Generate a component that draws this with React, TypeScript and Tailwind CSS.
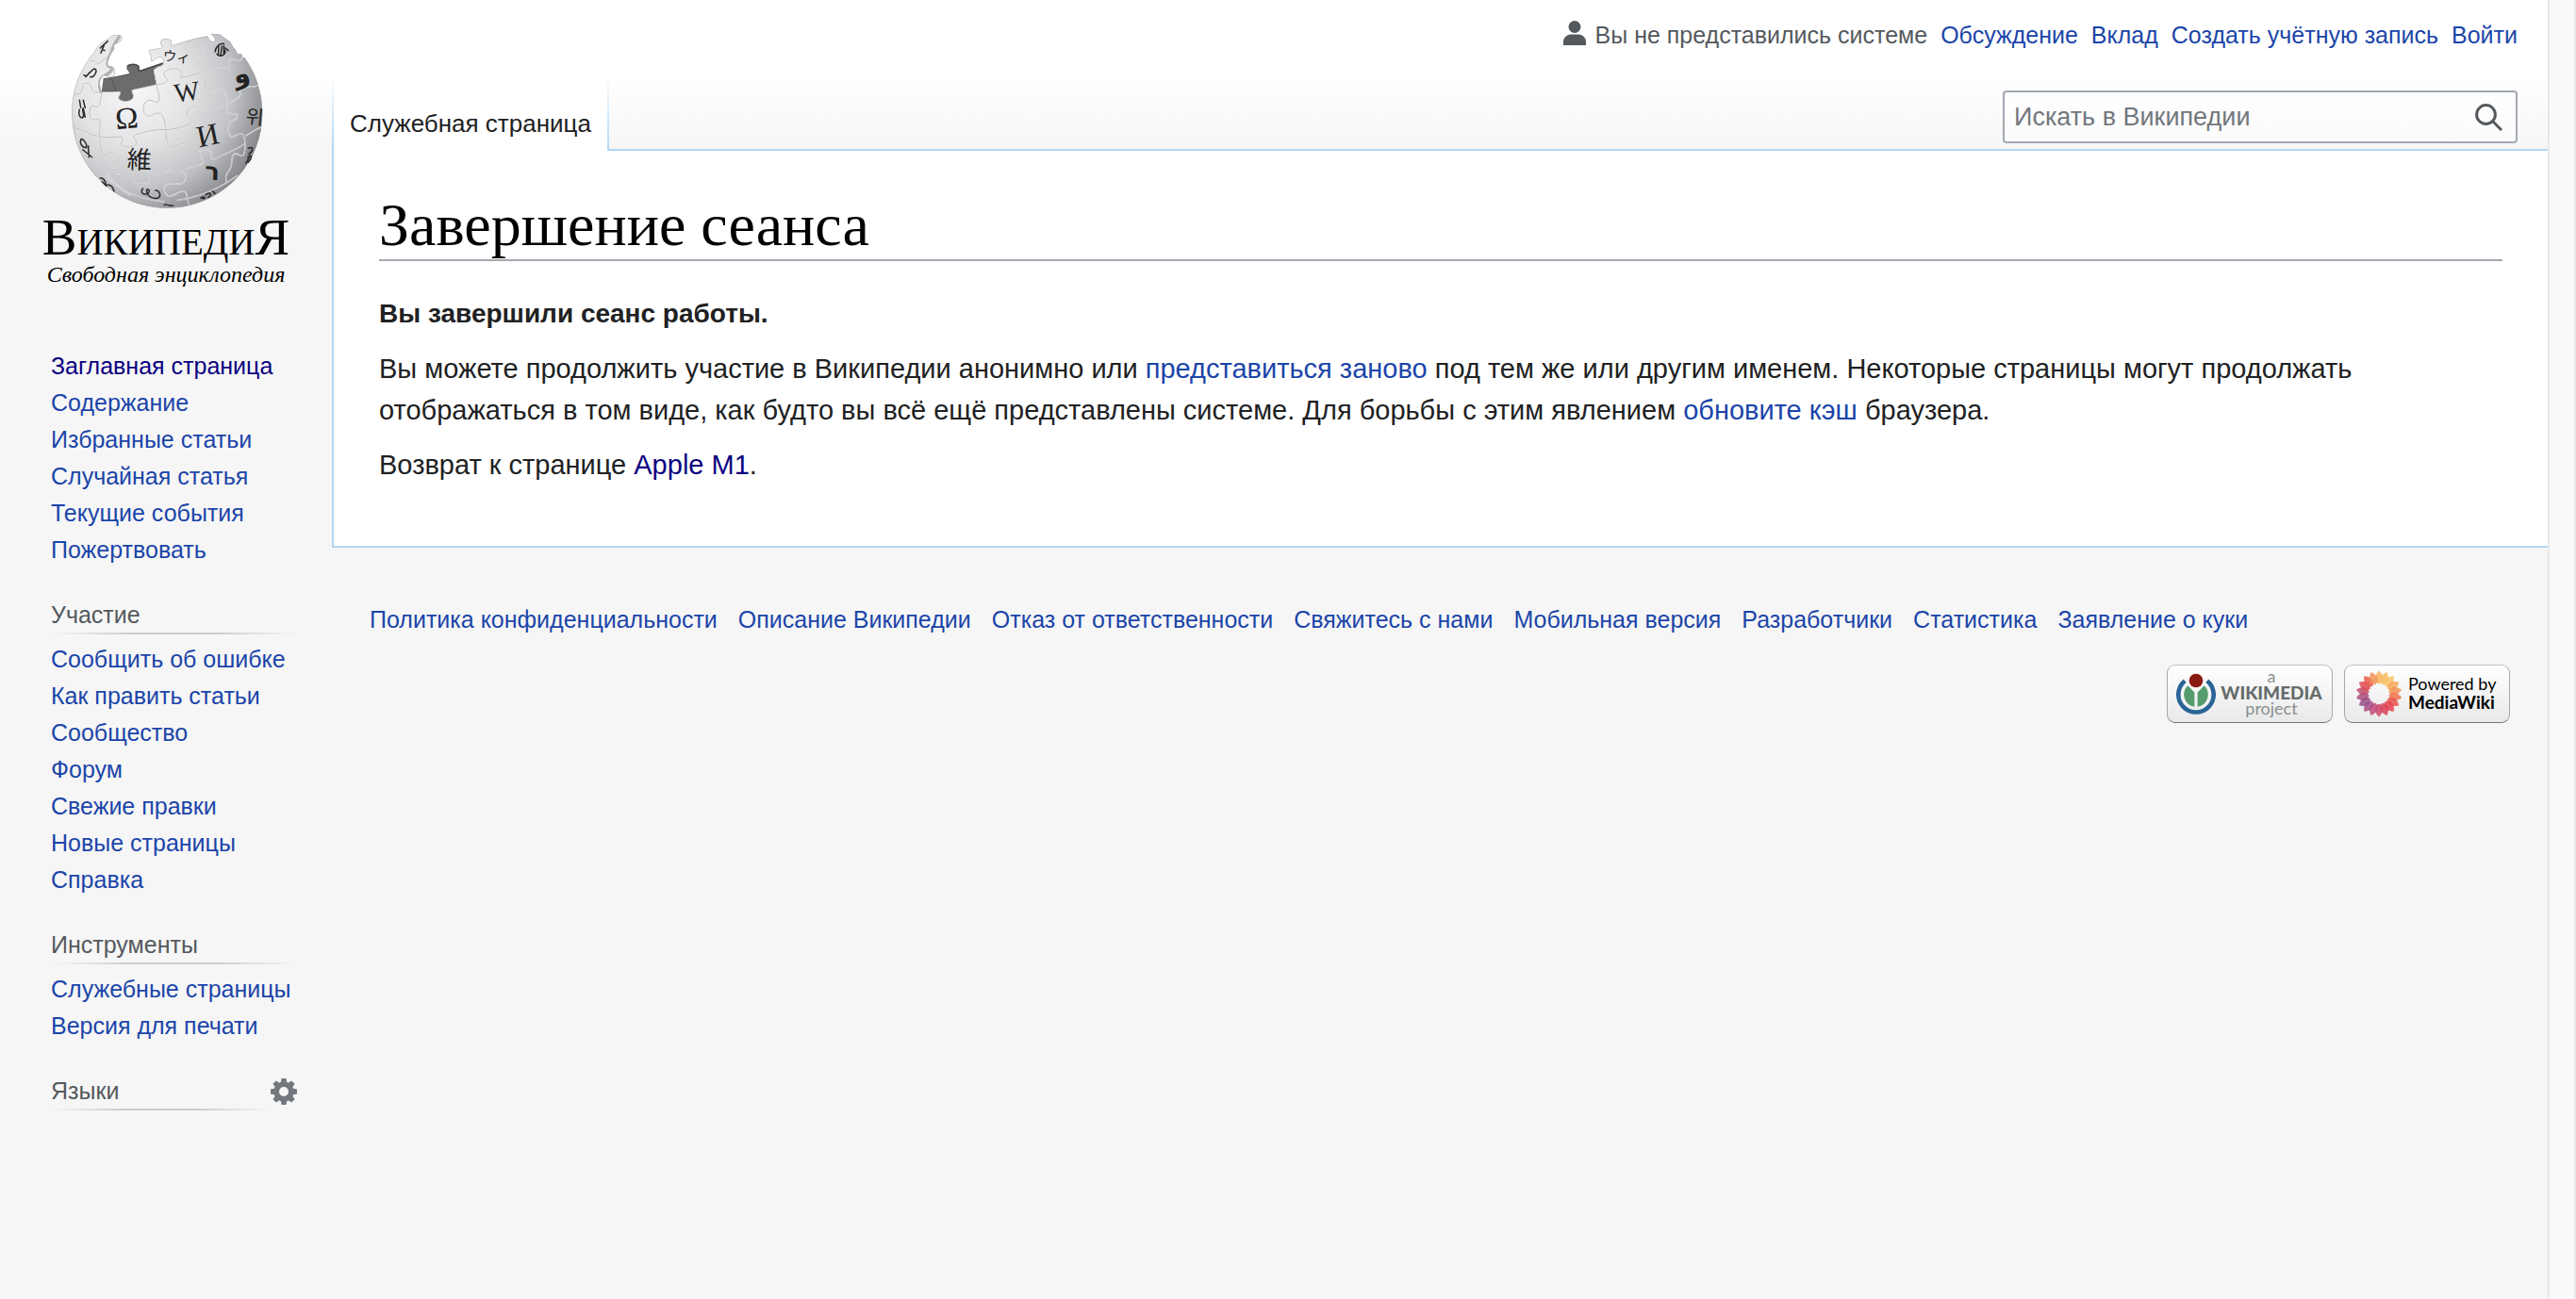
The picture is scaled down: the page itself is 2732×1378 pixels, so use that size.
import React from "react";

const BLUE = "text-[#1b45a9] hover:underline";
const VISITED = "text-[#0b0080] hover:underline";

type NavLink = { label: string; visited?: boolean };

const mainLinks: NavLink[] = [
  { label: "Заглавная страница", visited: true },
  { label: "Содержание" },
  { label: "Избранные статьи" },
  { label: "Случайная статья" },
  { label: "Текущие события" },
  { label: "Пожертвовать" },
];
const participation: NavLink[] = [
  { label: "Сообщить об ошибке" },
  { label: "Как править статьи" },
  { label: "Сообщество" },
  { label: "Форум" },
  { label: "Свежие правки" },
  { label: "Новые страницы" },
  { label: "Справка" },
];
const tools: NavLink[] = [{ label: "Служебные страницы" }, { label: "Версия для печати" }];

const footerLinks = [
  "Политика конфиденциальности",
  "Описание Википедии",
  "Отказ от ответственности",
  "Свяжитесь с нами",
  "Мобильная версия",
  "Разработчики",
  "Статистика",
  "Заявление о куки",
];

const SEAMS = [
  "M232 232 L226 262 C224 284 214 280 206 276 C192 274 190 296 194 310 C198 326 214 318 224 320 C228 345 222 360 225 375 C226 400 228 415 231 430 C240 442 250 420 266 426 C280 432 288 458 280 472 C270 486 246 470 244 484 C246 500 290 540 322 562",
  "M392 160 L405 208 C408 225 418 245 412 262 C404 270 392 254 376 260 C360 268 360 300 374 308 C390 314 398 296 416 300 C432 308 430 330 435 352 C436 372 436 392 450 404 C464 412 484 388 500 400 C508 412 506 430 492 434 C478 438 462 420 450 436 C444 452 442 470 446 482 C458 500 478 478 494 490 C504 500 498 520 484 524 C466 528 444 516 432 532 C424 548 436 564 450 564 C470 560 490 538 500 554 L508 592",
  "M508 70 C512 82 510 90 520 94 C534 84 548 86 558 102 C562 118 548 126 540 132 C538 150 560 158 576 166 C594 178 590 200 574 194 C560 194 556 214 562 232 C572 250 586 238 598 226 C614 218 626 230 629 244 C634 262 628 280 632 296 C640 312 656 294 664 306 C666 320 650 322 640 328 C630 340 632 366 642 374 C656 380 668 356 682 368 C690 392 690 410 684 430 C676 446 664 422 652 430 C640 444 650 462 640 478 C626 494 624 504 628 520",
  "M133 240 L160 238 C174 226 164 204 184 204 C204 208 194 230 210 234 L232 232",
  "M405 208 C425 208 440 200 440 192 C428 184 424 166 444 160 C464 154 482 160 486 168 C488 180 476 182 484 186 C515 182 545 172 572 160 C600 152 622 154 636 158 C640 136 634 130 646 128 C660 128 662 136 672 132 L682 118",
  "M142 345 C170 352 200 370 225 375 C250 378 275 376 294 374 C304 384 284 396 298 404 C314 410 330 408 342 398 C344 386 326 378 338 368 C368 360 400 350 435 352 C465 352 495 342 512 334 C526 326 510 314 502 304 C502 288 512 276 530 278 C544 284 540 300 552 302 C580 296 606 284 634 270 C660 258 678 244 672 236 C666 222 690 224 694 214 C710 220 720 216 732 210",
  "M165 420 C185 438 205 452 226 456 M275 494 C295 498 315 496 330 496 C338 508 324 516 336 524 C350 528 372 528 386 518 C388 504 370 498 380 488 C410 494 440 490 452 484 M500 478 C525 472 545 466 554 458 C560 446 540 438 542 424 C550 412 570 412 580 424 C584 440 574 446 588 446 C615 434 650 420 686 398",
  "M240 498 C290 550 350 572 430 582 M470 578 C540 568 600 546 664 498",
  "M196 134 C210 128 212 142 222 142 C234 132 240 126 252 120",
  "M690 372 C705 360 722 352 738 344",
];

const GLOBE =
  "M262 52 C256 62 240 68 228 76 C214 88 212 98 207 104 C160 160 135 225 136 300 C136 467 272 602 440 602 C607 602 743 467 743 300 C743 235 722 172 687 124 L680 122 L676 110 L664 112 C660 98 650 92 640 72 L606 48 L580 46 C584 56 596 60 590 70 C580 74 572 64 568 54 C530 60 490 72 455 84 C448 76 460 66 446 64 C434 60 418 62 418 76 C420 84 426 88 418 92 L382 98 C380 108 392 120 386 134 C396 140 406 118 420 122 C432 128 430 142 422 148 C410 150 402 156 396 162 L405 208 L327 225 C324 238 336 240 328 254 C318 264 296 264 286 254 C282 242 298 240 288 230 L232 232 C222 212 222 190 236 180 C248 178 262 192 272 178 C278 160 270 148 252 150 C244 140 262 106 272 94 C264 84 276 78 290 72 C300 62 296 50 286 50 C282 54 276 50 262 52 Z";

type Glyph = { c: string; x: number; y: number; s: number; r?: number; f?: string };
const glyphs: Glyph[] = [
  { c: "Ω", x: 313, y: 348, s: 98, r: -5 },
  { c: "W", x: 506, y: 260, s: 86, r: -8 },
  { c: "И", x: 575, y: 402, s: 98, r: -12 },
  { c: "維", x: 350, y: 476, s: 78, r: 2, f: "cjk" },
  { c: "ウィ", x: 468, y: 136, s: 44, r: 6, f: "cjk" },
  { c: "위", x: 716, y: 334, s: 62, r: 6, f: "cjk" },
  { c: "و", x: 682, y: 202, s: 84, r: -16, f: "sans" },
  { c: "ר", x: 582, y: 512, s: 78, r: 2, f: "sans" },
];

function Globe() {
  return (
    <svg viewBox="117 30 640 590" className="h-[197px] w-[213px]" role="img" aria-label="Глобус Википедии">
      <defs>
        <radialGradient id="ball" gradientUnits="userSpaceOnUse" cx="330" cy="220" r="440">
          <stop offset="0" stopColor="#f7f7f8" />
          <stop offset="0.4" stopColor="#e4e4e6" />
          <stop offset="0.72" stopColor="#c3c4c7" />
          <stop offset="1" stopColor="#85868a" />
        </radialGradient>
        <clipPath id="ballClip">
          <path d={GLOBE} />
        </clipPath>
      </defs>
      <path
        d="M236 190 C270 186 295 180 318 175 C322 164 304 162 312 150 C322 142 340 142 348 150 C350 158 344 166 356 164 L426 140 L428 148 L396 162 L405 208 L340 232 L340 262 L280 262 L280 236 L230 234 Z"
        fill="#6c6c6e"
      />
      <path d="M312 150 C322 142 340 142 348 150 C350 158 344 166 356 164 L426 140" fill="none" stroke="#48484a" strokeWidth="5" />
      <path d="M236 190 C270 186 295 180 318 175 M262 186 L276 228 L236 231" fill="none" stroke="#555557" strokeWidth="3" />
      <path d={GLOBE} fill="url(#ball)" />
      <g clipPath="url(#ballClip)" fill="none">
        {SEAMS.map((d) => (
          <g key={d}>
            <path d={d} stroke="#fafafa" strokeWidth="4" />
            <path d={d} stroke="#9c9da1" strokeWidth="2" />
          </g>
        ))}
        <path d="M288 52 C280 70 262 90 264 100 C250 130 240 150 262 154 C270 170 240 176 228 190 C220 210 226 226 232 234" stroke="#b1b2b6" strokeWidth="10" />
        <path d={GLOBE} stroke="#a5a6aa" strokeWidth="3" />
      </g>
      <g fill="#222" textAnchor="middle">
        {glyphs.map((g) => (
          <text
            key={g.c}
            x={g.x}
            y={g.y}
            fontSize={g.s}
            transform={`rotate(${g.r ?? 0} ${g.x} ${g.y})`}
            className={
              g.f === "cjk"
                ? "[font-family:'Noto_Sans_CJK_JP',sans-serif]"
                : g.f === "sans"
                  ? "font-bold [font-family:'DejaVu_Sans',sans-serif]"
                  : "[font-family:'Liberation_Serif',serif]"
            }
          >
            {g.c}
          </text>
        ))}
      </g>
      <g fill="none" stroke="#2b2b2d" strokeLinecap="round" strokeWidth="4.5">
        <path d="M250 70 L226 92 M238 84 L228 108 M232 96 L240 100" />
        <path d="M174 178 C184 190 198 158 208 158 C220 160 208 188 194 184 M180 184 L192 170" />
        <path d="M160 258 L164 282 M160 288 C156 302 160 316 170 314 C180 304 164 290 172 284 L178 312 M172 258 L178 282" />
        <path d="M166 382 C158 394 168 410 182 410 C186 398 174 386 168 382 M170 416 L200 440 M188 404 L190 440" />
        <path d="M226 506 C238 506 244 520 246 532 M250 528 C262 528 268 540 270 548 M232 518 L246 532" />
        <path d="M362 540 C352 552 364 562 378 556 C390 544 372 536 374 548 C376 566 396 574 410 570 C424 562 412 544 402 546" />
        <path d="M430 592 C436 586 444 598 458 594" />
        <path d="M546 570 C558 562 566 574 552 572 M562 560 C578 548 584 560 570 568 M584 548 L592 556" />
        <path d="M592 104 C594 86 608 76 620 78 M602 112 L604 88 M610 114 L614 86 M620 112 L620 84 M598 112 C612 124 632 108 622 98 M624 92 L634 100" />
        <path d="M698 412 C716 402 714 420 700 430 M696 440 C710 428 712 440 698 456 M690 460 L700 442" />
      </g>
    </svg>
  );
}

function Logo() {
  return (
    <a href="#" className="flex flex-col items-center pt-[30px] text-black [font-family:'Liberation_Serif',serif]">
      <Globe />
      <span className="mt-[5px] text-[39px] leading-10">
        <span className="text-[55px] leading-10">В</span>ИКИПЕДИ<span className="text-[55px] leading-10">Я</span>
      </span>
      <span className="text-[24px] leading-[28px] italic">Свободная энциклопедия</span>
    </a>
  );
}

function LinkList({ items }: { items: NavLink[] }) {
  return (
    <ul>
      {items.map((l) => (
        <li key={l.label}>
          <a href="#" className={l.visited ? VISITED : BLUE}>
            {l.label}
          </a>
        </li>
      ))}
    </ul>
  );
}

function Rule() {
  return <div className="h-[2px] bg-[linear-gradient(to_right,rgba(200,204,209,0),#c8ccd1_33%,#c8ccd1_66%,rgba(200,204,209,0))]" />;
}

function Portal({ title, items }: { title: string; items: NavLink[] }) {
  return (
    <section className="mt-[30px]">
      <h3 className="leading-[38px] text-[#54595d]">{title}</h3>
      <Rule />
      <div className="mt-[7px]">
        <LinkList items={items} />
      </div>
    </section>
  );
}

function Gear() {
  return (
    <svg viewBox="0 0 28 28" className="size-7" aria-hidden="true">
      <g fill="#72777d">
        {[0, 45, 90, 135].map((a) => (
          <path key={a} d="M11.6 0 H16.4 L17.4 5 V23 L16.4 28 H11.6 L10.6 23 V5 Z" transform={`rotate(${a} 14 14)`} />
        ))}
        <circle cx="14" cy="14" r="10.6" />
      </g>
      <circle cx="14" cy="14" r="5" fill="#f6f6f6" />
    </svg>
  );
}

function Sidebar() {
  return (
    <aside className="w-[352px] shrink-0">
      <div className="h-[369px]">
        <Logo />
      </div>
      <nav className="pr-9 pl-[54px] text-[25px] leading-[39px]">
        <LinkList items={mainLinks} />
        <Portal title="Участие" items={participation} />
        <Portal title="Инструменты" items={tools} />
        <section className="mt-[30px] flex items-start">
          <div className="flex-1">
            <h3 className="leading-[38px] text-[#54595d]">Языки</h3>
            <Rule />
          </div>
          <button type="button" aria-label="Настройки языка" className="mt-[6px] mr-[1px]">
            <Gear />
          </button>
        </section>
      </nav>
    </aside>
  );
}

function Header() {
  const edge = "w-[2px] bg-[linear-gradient(#fff,#afd6f5)]";
  return (
    <header className="flex h-[160px]">
      <div className="flex items-end">
        <div className="flex h-20">
          <div className={edge} />
          <a href="#" className="bg-white px-[17px] pt-[32px] text-[26px] leading-[38px] text-[#202122]">
            Служебная страница
          </a>
          <div className={edge} />
        </div>
      </div>
      <div className="flex flex-1 flex-col items-end border-b-2 border-[#afd6f5] pr-8">
        <nav className="flex items-center gap-[14px] pt-[18px] text-[25px] leading-[39px]">
          <span className="flex items-center gap-[10px] text-[#54595d]">
            <svg viewBox="0 0 24 26" className="mb-[6px] h-[26px] w-6" fill="#54595d" aria-hidden="true">
              <circle cx="12" cy="6.5" r="6.5" />
              <path d="M0 26 V22.5 C0 17.5 4.5 14.6 8 14.6 H16 C19.5 14.6 24 17.5 24 22.5 V26 Z" />
            </svg>
            Вы не представились системе
          </span>
          {["Обсуждение", "Вклад", "Создать учётную запись", "Войти"].map((t) => (
            <a key={t} href="#" className={BLUE}>
              {t}
            </a>
          ))}
        </nav>
        <form
          className="mt-[39px] flex h-14 w-[546px] items-center rounded-[4px] border-2 border-[#a2a9b1] bg-white/50"
          onSubmit={(e) => e.preventDefault()}
        >
          <input
            type="search"
            aria-label="Искать в Википедии"
            placeholder="Искать в Википедии"
            className="min-w-0 flex-1 bg-transparent pl-[10px] text-[27px] leading-8 outline-none placeholder:text-[#72777d]"
          />
          <button type="submit" aria-label="Найти" className="mr-[14px]">
            <svg viewBox="0 0 29 29" className="size-[29px]" fill="none" stroke="#54595d" strokeWidth="3" aria-hidden="true">
              <circle cx="11.5" cy="11.5" r="9.9" />
              <path d="M18.5 18.5 L28 28" />
            </svg>
          </button>
        </form>
      </div>
    </header>
  );
}

function WikimediaMark() {
  return (
    <svg viewBox="0 0 42 44" className="h-11 w-[42px]" aria-hidden="true">
      <path d="M9.2 8.3 A18.7 18.7 0 1 0 32.8 8.3" fill="none" stroke="#2a6496" strokeWidth="4.6" />
      <path d="M19.4 35.8 A13.3 13.3 0 0 1 12.2 13.2 L19.4 20.4 Z" fill="#549c6c" />
      <path d="M22.6 35.8 A13.3 13.3 0 0 0 29.8 13.2 L22.6 20.4 Z" fill="#549c6c" />
      <circle cx="21" cy="8" r="8.6" fill="#f7f7f7" />
      <circle cx="21" cy="8" r="7.3" fill="#8b1a10" />
    </svg>
  );
}

const PETALS = [
  "#f7b45f", "#f8bd62", "#f9c064", "#f6a95b", "#f39154", "#ef7350", "#ea544c", "#e5424c", "#db4255",
  "#cf4764", "#c14c78", "#a94f88", "#99508c", "#a84f80", "#c24c6a", "#dd4a54", "#e95c4c", "#f39457",
];

function Sunflower() {
  return (
    <svg viewBox="-25 -25 50 50" className="size-[50px]" aria-hidden="true">
      {PETALS.map((c, i) => (
        <path
          key={i}
          d="M0 -24.5 C2.6 -22 4.4 -19 4.2 -16 C3.8 -13 2 -11.5 0 -10.5 C-2 -11.5 -3.8 -13 -4.2 -16 C-4.4 -19 -2.6 -22 0 -24.5 Z"
          fill={c}
          fillOpacity="0.86"
          transform={`rotate(${(i * 360) / PETALS.length})`}
        />
      ))}
    </svg>
  );
}

const BADGE =
  "flex h-[62px] w-[176px] items-center rounded-[9px] border border-[#a8a8a8] border-t-[#c4c4c4] border-b-[#777] bg-[linear-gradient(#fff,#e9e9e9)] [font-family:Lato,sans-serif]";

function Footer() {
  return (
    <footer className="pr-10 pl-10">
      <ul className="flex flex-wrap gap-x-[22px] pt-14 text-[25px] leading-10">
        {footerLinks.map((t) => (
          <li key={t}>
            <a href="#" className={BLUE}>
              {t}
            </a>
          </li>
        ))}
      </ul>
      <div className="mt-7 flex justify-end gap-3">
        <a href="#" className={BADGE}>
          <span className="ml-[9px] shrink-0">
            <WikimediaMark />
          </span>
          <span className="ml-[5px] flex w-[108px] flex-col items-center pb-1 text-[18px] leading-[17px] text-[#8a908d]">
            <span>a</span>
            <span className="text-[19px] font-black text-[#666c6a]">WIKIMEDIA</span>
            <span>project</span>
          </span>
        </a>
        <a href="#" className={BADGE}>
          <span className="ml-[11px] shrink-0">
            <Sunflower />
          </span>
          <span className="ml-[6px] flex flex-col pb-[2px] text-[18px] leading-5 whitespace-nowrap text-black">
            <span>Powered by</span>
            <span className="text-[19px] font-bold">MediaWiki</span>
          </span>
        </a>
      </div>
    </footer>
  );
}

export default function App() {
  return (
    <div className="flex min-h-screen bg-[#f6f6f6] text-[#202122] [font-family:'Liberation_Sans',Arial,sans-serif]">
      <div className="flex min-w-0 flex-1 bg-[linear-gradient(#fff_80px,#f6f6f6_160px)]">
        <Sidebar />
        <div className="min-w-0 flex-1">
          <Header />
          <main className="border-b-2 border-l-2 border-[#afd6f5] bg-white px-12 pt-[42px] pb-16 text-[29px] leading-[44px]">
            <h1 className="border-b-2 border-[#a2a9b1] text-[64px] leading-[73px] text-black [font-family:'Liberation_Serif',serif]">
              Завершение сеанса
            </h1>
            <p className="mt-[33px] text-[28px] leading-[45px] font-bold">Вы завершили сеанс работы.</p>
            <p className="mt-[14px]">
              Вы можете продолжить участие в Википедии анонимно или{" "}
              <a href="#" className={BLUE}>
                представиться заново
              </a>{" "}
              под тем же или другим именем. Некоторые страницы могут продолжать отображаться в том виде, как будто вы всё
              ещё представлены системе. Для борьбы с этим явлением{" "}
              <a href="#" className={BLUE}>
                обновите кэш
              </a>{" "}
              браузера.
            </p>
            <p className="mt-[14px]">
              Возврат к странице{" "}
              <a href="#" className={VISITED}>
                Apple M1
              </a>
              .
            </p>
          </main>
          <Footer />
        </div>
      </div>
      <div className="w-[30px] shrink-0 border-x-2 border-[#e8e8e8] bg-[#fafafa]" />
    </div>
  );
}
